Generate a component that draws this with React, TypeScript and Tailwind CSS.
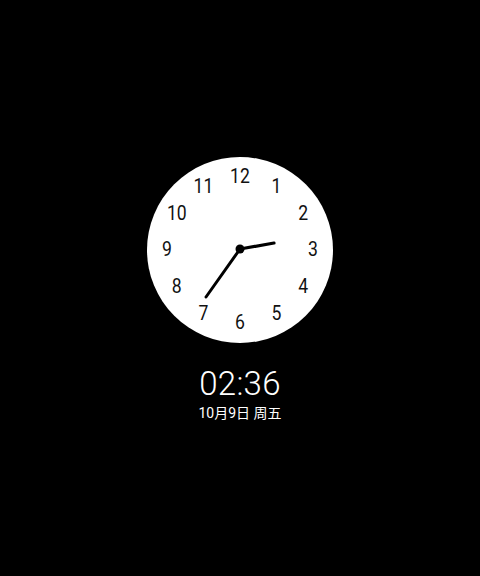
import React from 'react';

const numbers = [12, 1, 2, 3, 4, 5, 6, 7, 8, 9, 10, 11];

function ClockFace() {
  const r = 73;
  return (
    <svg width="186" height="186" viewBox="0 0 186 186">
      <circle cx="93" cy="93" r="93" fill="#ffffff" />
      {numbers.map((n, i) => {
        const a = (i * 30 * Math.PI) / 180;
        const x = 93 + r * Math.sin(a);
        const y = 93 - r * Math.cos(a);
        return (
          <text
            key={n}
            x={x}
            y={y}
            textAnchor="middle"
            dominantBaseline="central"
            fontFamily="Roboto, sans-serif"
            fontSize="20"
            fill="#111"
            transform={`translate(${x} ${y}) scale(0.88 1) translate(${-x} ${-y})`}
          >
            {n}
          </text>
        );
      })}
      <line x1="93" y1="92" x2="127" y2="86" stroke="#000" strokeWidth="3.2" strokeLinecap="round" />
      <line x1="93" y1="92" x2="59" y2="140" stroke="#000" strokeWidth="3" strokeLinecap="round" />
      <circle cx="93" cy="92" r="4.5" fill="#000" />
    </svg>
  );
}

export default function App() {
  return (
    <div className="w-[480px] h-[576px] bg-black flex flex-col items-center pt-[157px] text-white font-['Roboto',sans-serif]">
      <ClockFace />
      <div className="mt-[24px] text-[33px] leading-none font-light tracking-[0.3px]">02:36</div>
      <div className="mt-[6px] text-[14px] leading-none font-['Roboto','Noto_Sans_CJK_SC',sans-serif]">10月9日 周五</div>
    </div>
  );
}
